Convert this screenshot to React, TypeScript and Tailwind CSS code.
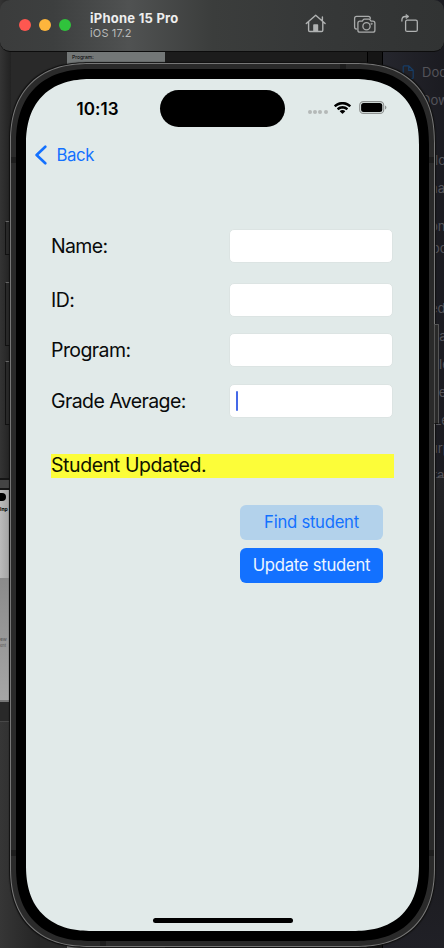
const fields = [
  { text: "Name:", style: "h-[34px] tracking-[-0.65px]" },
  { text: "ID:", style: "mt-[20px] h-[34px] tracking-[-0.5px]" },
  { text: "Program:", style: "mt-[16px] h-[34px] tracking-[-0.57px]" },
  { text: "Grade Average:", style: "mt-[17px] h-[34px] tracking-[-0.58px]" },
];

const sidebarRows = [
  { text: "Doc", row: "h-[28px] pl-[39px]" },
  { text: "Dow", row: "h-[60px] pl-[38px]" },
  { text: "lo", row: "h-[28px] pl-[52px]" },
  { text: "na", row: "h-[38px] pl-[47px]" },
  { text: "on", row: "h-[22px] pl-[47px]" },
  { text: "oc", row: "h-[60px] pl-[49px]" },
  { text: "ed", row: "h-[28px] pl-[47px]" },
  { text: "ta", row: "h-[28px] pl-[52px]" },
  { text: "le", row: "h-[28px] pl-[56px]" },
  { text: "re", row: "h-[28px] pl-[51px]" },
  { text: "Le", row: "h-[28px] pl-[51px]" },
  { text: "urp", row: "h-[27px] pl-[47px]" },
  { text: "ra", row: "h-[28px] pl-[49px]" },
];

function Desktop() {
  return (
    <div className="absolute inset-0 flex overflow-hidden bg-[#292929] font-[Inter]">
      <div className="flex w-[67px] shrink-0 flex-col">
        <div className="h-[478px] w-[11px] bg-linear-to-r from-[#343434] to-[#222222]" />
        <div className="h-[12px] w-[11px] border-y-2 border-[#151515] bg-[#444]" />
        <div className="flex h-[212px] w-[9px] flex-col overflow-hidden border-b-2 border-[#777] bg-linear-to-r from-[#bbbbbb] to-[#a5a5a5]">
          <div className="mt-[3px] h-[8px] w-[6px] rounded-r-full bg-black" />
          <div className="mt-[5px] h-[72px] text-[5px] font-bold leading-[6px] text-black">Inp</div>
          <div className="flex-1 bg-linear-to-b from-[#8b8b8b] to-[#a6a6a6] pt-[57px] text-[#555]">
            <div className="text-[5px] leading-[8px]">ew</div>
            <div className="text-[4px] leading-[5px]">ent</div>
          </div>
        </div>
        <div className="h-[20px] w-[11px] border-b border-[#484848] bg-[#292929]" />
        <div className="w-[40px] flex-1 bg-linear-to-r from-[#363636] to-[#242424]" />
      </div>
      <div className="flex w-[98px] shrink-0 flex-col justify-between pt-[50px]">
        <div className="h-[20px] bg-[#737777] pl-[5px] pt-[3px] text-[5px] leading-[8px] text-black">Program:</div>
        <div className="h-[3px] bg-[#777]" />
      </div>
      <div className="w-[202px] shrink-0 bg-[#1c1c1c]" />
      <div className="w-[16px] shrink-0 border-x border-black bg-[#151515]" />
      <div className="flex w-[61px] shrink-0 flex-col">
        <div className="h-[478px] border-b border-[#444448] bg-linear-to-r from-[#25262d] to-[#1b1b21] pt-[64px]">
          {sidebarRows.map((s, i) => (
            <div key={s.text} className={`relative whitespace-nowrap text-[13px] leading-[17px] text-[#535359] ${s.row}`}>
              {i === 0 && (
                <svg className="absolute left-[19px] top-px" width="13" height="15" viewBox="0 0 13 15" fill="none" stroke="#173d66" strokeWidth="1.2">
                  <path d="M1.2 1.8Q1.2.8 2.2.8H6.7L11.2 5.3V12.6Q11.2 13.6 10.2 13.6H2.2Q1.2 13.6 1.2 12.6ZM6.7.8V5.3H11.2" />
                </svg>
              )}
              {s.text}
            </div>
          ))}
        </div>
        <div className="relative flex-1 bg-linear-to-b from-[#232326] via-[#141416] to-[#202026]" />
      </div>
    </div>
  );
}

function LeftButtons() {
  return (
    <div className="-mr-[2px] flex w-[7px] flex-col pt-[158px]">
      <div className="h-[34px] rounded-l-[1px] border border-[#111] border-t-[#666] bg-[#292929]" />
      <div className="mt-[27px] h-[64px] rounded-l-[1px] border border-[#111] border-t-[#666] bg-[#292929]" />
      <div className="mt-[15px] h-[64px] rounded-l-[1px] border border-[#111] border-t-[#666] bg-[#292929]" />
    </div>
  );
}

function TitleBar() {
  return (
    <header className="flex h-[51.5px] items-start justify-between rounded-[10px] border-b border-[#0c0c0c] bg-[linear-gradient(90deg,#3b3c3c_0%,#3d3f3f_12%,#505252_29%,#3b3d3c_48%,#363838_70%,#313333_100%)] pl-[19px] pr-[25px] font-[Inter]">
      <div className="flex">
        <div className="mt-[19px] flex gap-[8px]">
          <span className="size-[12px] rounded-full bg-[#fe5750]" />
          <span className="size-[12px] rounded-full bg-[#fdb53c]" />
          <span className="size-[12px] rounded-full bg-[#30c33c]" />
        </div>
        <div className="ml-[19px] mt-[10px]">
          <div className="whitespace-nowrap text-[13px] font-bold leading-[16px] tracking-[0.25px] text-[#eeeeee]">iPhone 15 Pro</div>
          <div className="text-[11px] leading-[14px] tracking-[0.15px] text-[#b9baba]">iOS 17.2</div>
        </div>
      </div>
      <div className="mt-[13px] flex gap-[24.5px]">
        <svg width="22" height="20" viewBox="0 0 22 20" fill="none" stroke="#b0b2b2" strokeWidth="1.4" strokeLinecap="round" strokeLinejoin="round">
          <path d="M1.3 10.6 10.7 2.2 20.1 10.6M3.6 9V17.3Q3.6 18.5 4.8 18.5H16.6Q17.8 18.5 17.8 17.3V9M17.4 7.5V4" />
          <path d="M8.9 18.2V12H12.5V18.2Z" fill="#b0b2b2" />
        </svg>
        <svg width="24" height="21" viewBox="-.8 0 24 21" fill="none" stroke="#a9abab" strokeWidth="1.3" strokeLinejoin="round" strokeLinecap="round">
          <path d="M3.600 16Q1.800 16 1.800 14V5.400Q1.800 3.400 3.800 3.400H15.400Q17.500 3.400 17.500 5.400" />
          <path d="M7.100 8.200H8.800Q9.500 8.200 9.900 7.600L10.500 6.700Q10.800 6.200 11.500 6.200H16.200Q16.900 6.200 17.200 6.700L17.800 7.600Q18.200 8.200 18.900 8.200H20.100Q22.100 8.200 22.100 10.200V17.200Q22.100 19.200 20.100 19.200H7.100Q5.100 19.200 5.100 17.200V10.200Q5.100 8.200 7.100 8.200Z" />
          <circle cx="13.7" cy="13.3" r="3.6" />
          <circle cx="18.8" cy="10.8" r=".4" />
        </svg>
        <svg width="19" height="20" viewBox="0 0 19 20" fill="none" stroke="#b0b2b2" strokeWidth="1.3" strokeLinejoin="round" strokeLinecap="round">
          <rect x="5.6" y="7.2" width="11.7" height="11.2" rx="1.5" />
          <path d="M1.9 8V7Q1.9 3.6 5.4 3.5H7.2" />
          <path d="M6.3 1.5 9 3.5 6.3 5.5Z" fill="#b0b2b2" strokeWidth=".6" />
        </svg>
      </div>
    </header>
  );
}

function StatusBar() {
  return (
    <div className="flex h-[60px] items-start">
      <div className="ml-[50.5px] mt-[19px] w-[83.5px] text-[17px] font-semibold leading-[22px] tracking-[0.05px] text-black">10:13</div>
      <div className="mt-[11px] h-[37px] w-[125px] rounded-full bg-black" />
      <div className="ml-[22.5px] mt-[31.5px] flex gap-[1.4px]">
        <span className="size-[4px] rounded-full bg-[#b4b9b8]" />
        <span className="size-[4px] rounded-full bg-[#b4b9b8]" />
        <span className="size-[4px] rounded-full bg-[#b4b9b8]" />
        <span className="size-[4px] rounded-full bg-[#b4b9b8]" />
      </div>
      <svg className="ml-[6.5px] mt-[23px]" width="17" height="12.4" viewBox="0 0 17 12.4" fill="black">
        <path d="M8.5 2.5c2.5 0 4.8 1 6.6 2.6.1.1.3.1.5 0l1.3-1.3c.1-.2.1-.4 0-.5-4.7-4.5-12.1-4.5-16.8 0-.1.1-.1.3 0 .5l1.3 1.3c.1.1.3.1.5 0C3.7 3.5 6 2.5 8.5 2.5z" />
        <path d="M8.5 6.7c1.4 0 2.7.5 3.7 1.4.1.1.3.1.5 0l1.3-1.3c.1-.1.1-.4 0-.5-3.1-2.9-7.9-2.9-11 0-.1.1-.1.4 0 .5l1.3 1.3c.2.1.4.1.5 0 1-.9 2.3-1.4 3.7-1.4z" />
        <path d="M11.1 9.5c.1-.1.1-.4 0-.5-1.5-1.3-3.7-1.3-5.2 0-.1.1-.1.4 0 .5l2.4 2.3c.1.1.3.1.4 0z" />
      </svg>
      <svg className="ml-[7.5px] mt-[22.5px]" width="28" height="13" viewBox="0 0 28 13">
        <rect x=".7" y=".6" width="24" height="11.8" rx="3.7" fill="none" stroke="#8e9291" strokeWidth="1.1" />
        <rect x="2.1" y="2" width="21.2" height="9" rx="2.5" />
        <path d="M26 4.6V8.5Q27.4 7.9 27.4 6.55Q27.4 5.2 26 4.6Z" fill="#8e9291" />
      </svg>
    </div>
  );
}

function FrameSide() {
  return (
    <div className="flex w-[5px] flex-col pt-[93px]">
      <div className="h-[6px] bg-[#1d1d1d]" />
      <div className="mt-[687px] h-[6px] bg-[#1d1d1d]" />
    </div>
  );
}

function Screen() {
  return (
    <main className="flex h-full flex-col overflow-hidden rounded-[66px] bg-[#e1eae9] font-[Inter] [corner-shape:superellipse(1.25)]">
      <StatusBar />
      <nav className="flex h-[32px] items-center pl-[8px] text-[#1371ff]">
        <svg width="14" height="20" viewBox="0 0 14 20" fill="none" stroke="currentColor" strokeWidth="2.6" strokeLinecap="round" strokeLinejoin="round">
          <path d="M11.3 1.7 2.6 10 11.3 18.3" />
        </svg>
        <span className="ml-[8.500px] text-[16.8px] leading-[22px] tracking-[-0.4px]">Back</span>
      </nav>
      <form className="mt-[58.5px] flex flex-col pl-[25px] pr-[26px] text-[19.5px]">
        {fields.map((f, i) => (
          <label key={f.text} className={`flex items-center justify-between ${f.style}`}>
            <span className="leading-[24px] text-[#090b0b]">{f.text}</span>
            <span className="flex h-[34px] w-[164px] items-center rounded-[5px] border border-[#dce4e3] bg-white pl-[6px]">
              {i === 3 && <span className="h-[20px] w-[2px] rounded-full bg-[#4569e8]" />}
            </span>
          </label>
        ))}
        <div className="-mr-px mt-[35.5px] h-[24px] bg-[#fcfd39] leading-[23px] tracking-[-0.4px] text-[#111400]">Student Updated.</div>
        <div className="mr-[10px] mt-[27px] flex w-[143px] flex-col gap-[8px] self-end text-[16.7px] tracking-[-0.27px]">
          <button type="button" className="h-[35px] whitespace-nowrap rounded-[6px] bg-[#b3d2eb] pt-[2px] text-[#1371ff]">Find student</button>
          <button type="button" className="h-[35px] whitespace-nowrap rounded-[6px] bg-[#1371ff] pt-[2px] text-[#edf5ff]">Update student</button>
        </div>
      </form>
      <div className="mb-[8px] mt-auto h-[5px] w-[140px] self-center rounded-full bg-black" />
    </main>
  );
}

function Phone() {
  return (
    <div className="flex h-[884.5px] w-[425px] overflow-hidden rounded-[80px] border border-[#777777] bg-[#2a2a2a] shadow-[0_0_1px_1px_#111] [corner-shape:superellipse(1.25)]">
      <FrameSide />
      <div className="flex flex-1 flex-col">
        <div className="h-[5px] pl-[324px]">
          <div className="h-full w-[6px] bg-[#1d1d1d]" />
        </div>
        <div className="min-h-0 flex-1 rounded-[75px] bg-black p-[10px] [corner-shape:superellipse(1.25)]">
          <Screen />
        </div>
        <div className="h-[5px] pl-[84px]">
          <div className="h-full w-[6px] bg-[#1d1d1d]" />
        </div>
      </div>
      <FrameSide />
    </div>
  );
}

export default function App() {
  return (
    <div className="relative h-[948px] w-[444px] overflow-hidden">
      <Desktop />
      <div className="relative flex flex-col">
        <TitleBar />
        <div className="mt-[11px] flex pl-[5px]">
          <LeftButtons />
          <Phone />
          <div className="-ml-px mt-[261px] h-[100px] w-[5px] rounded-r-[1px] border border-[#555] border-b-[#111] bg-[#292929]" />
        </div>
      </div>
    </div>
  );
}
